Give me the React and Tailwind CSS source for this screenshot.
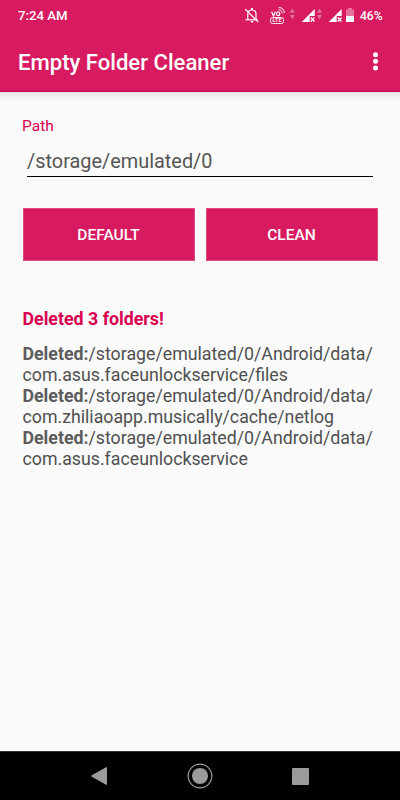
import React from "react";

function StatusIcons() {
  return (
    <svg width="116" height="24" viewBox="242 4 116 24" fill="none" aria-hidden="true">
      {/* muted bell */}
      <g stroke="#fff" strokeWidth="1.2">
        <path d="M247.8 19.6V14.2c0-2.6 1.700-4.200 4.100-4.200s4.100 1.600 4.100 4.200v5.400" />
        <path d="M245.500 19.800h12.200" />
        <path d="M245.300 9.300l13 12.800" />
      </g>
      <path d="M251 8h2v2h-2zM250.500 21h3c0 .9-.7 1.500-1.500 1.500s-1.500-.6-1.500-1.500z" fill="#fff" />
      {/* VoLTE */}
      <g stroke="#fff" strokeWidth="1">
        <path d="M271.600 11.700l1.900 4.300 1.900-4.300" strokeWidth="1.200" />
        <ellipse cx="278.200" cy="13.800" rx="1.600" ry="1.900" strokeWidth="1.200" />
        <path d="M278.500 9.700c2.300-.1 3.700 1.400 3.700 3.800" strokeWidth=".9" />
        <path d="M278.700 7.500c3.600-.1 5.700 2.200 5.700 5.700" strokeWidth=".9" />
      </g>
      <rect x="270.500" y="17.500" width="13" height="6" rx="2" stroke="#fff" strokeWidth=".9" />
      <text x="272.400" y="22.300" fontSize="5" fontWeight="700" textLength="9.200" fill="#fff" className="font-['Roboto',sans-serif]">LTE</text>
      {/* data arrows */}
      <g fill="#dc7398">
        <path d="M289.700 12.800l2.600-4.300 2.600 4.300zM289.700 14.900h5.200l-2.600 4.300z" />
        <path d="M316.900 12.800l2.600-4.300 2.600 4.300zM316.900 14.900h5.200l-2.600 4.300z" />
      </g>
      {/* signal bars */}
      <g fill="#fff">
        <path d="M301.800 22L314.700 9v7h-5v6z" />
        <path d="M328.800 22L341.700 9v7h-5v6z" />
      </g>
      <g stroke="#fff" strokeWidth="1.300">
        <path d="M310.800 17.500l3.600 4M314.400 17.500l-3.600 4" />
        <path d="M337.800 17.500l3.600 4M341.400 17.500l-3.600 4" />
      </g>
      {/* battery */}
      <path d="M348 8h4v1.500h2V16h-8V9.500h2z" fill="#e8709c" />
      <path d="M346 16h8v5.400q0 .6-.6.600h-6.800q-.6 0-.6-.6z" fill="#fff" />
    </svg>
  );
}

const deleted = [
  ["/storage/emulated/0/Android/data/", "com.asus.faceunlockservice/files"],
  ["/storage/emulated/0/Android/data/", "com.zhiliaoapp.musically/cache/netlog"],
  ["/storage/emulated/0/Android/data/", "com.asus.faceunlockservice"],
];

export default function App() {
  return (
    <div className="flex h-[800px] w-[400px] flex-col overflow-hidden bg-[#fafafa] font-['Roboto',sans-serif]">
      <header className="h-[92px] shrink-0 border-b border-[#cf0a4c] bg-[#d81b60] text-white">
        <div className="flex h-8 items-center pl-[18px] pr-[17px]">
          <span className="text-[13.2px] font-medium leading-4">7:24 AM</span>
          <div className="ml-auto flex items-center gap-[2px]">
            <StatusIcons />
            <span className="w-[23px] whitespace-nowrap text-[12px] font-medium leading-4">46%</span>
          </div>
        </div>
        <div className="flex h-[60px] items-center justify-between pl-[18px] pr-[22px]">
          <h1 className="text-[22.1px] font-medium leading-7">Empty Folder Cleaner</h1>
          <svg width="5" height="20" viewBox="0 0 5 20" fill="#fff" aria-hidden="true">
            <circle cx="2.5" cy="2.700" r="2.500" />
            <circle cx="2.5" cy="9.300" r="2.500" />
            <circle cx="2.5" cy="15.900" r="2.500" />
          </svg>
        </div>
      </header>
      <div className="h-3 shrink-0 bg-linear-to-b from-[#e4e4e4] via-[#f5f5f5] to-[#fafafa]" />

      <main className="flex-1 px-[22px] pt-3">
        <label className="block text-[15.5px] leading-5 text-[#d8004f]">Path</label>
        <div className="mx-[5px] mt-[12px] h-[29px] border-b border-black text-[19.9px] leading-[27px] text-[#555]">
          /storage/emulated/0
        </div>
        <div className="mt-[31px] flex h-[53px] gap-[11px] pl-[0.5px]">
          <button className="h-full w-[172px] border border-[#de4a80] bg-[#d81b60] pt-[3px] text-[15.5px] font-medium text-white">DEFAULT</button>
          <button className="h-full w-[172px] border border-[#de4a80] bg-[#d81b60] pt-[3px] text-[15.5px] font-medium text-white">CLEAN</button>
        </div>
        <h2 className="mt-[47px] pl-[0.5px] text-[17.8px] font-bold leading-[21px] text-[#d8004f]">Deleted 3 folders!</h2>
        <div className="mt-[15px] whitespace-nowrap pl-[0.5px] text-[17.75px] leading-[21.1px] text-[#505050]">
          {deleted.map(([dir, name]) => (
            <p key={name}>
              <b className="text-[#5c5c5c]">Deleted:</b>{dir}
              <br />
              {name}
            </p>
          ))}
        </div>
      </main>

      <nav className="flex h-[49px] shrink-0 items-center justify-between border-t border-[#333] bg-black pl-[90px] pr-[91px]">
        <svg width="18" height="20" viewBox="0 0 18 20" aria-hidden="true">
          <path d="M1.500 10L16.500 1.500v17z" fill="#9b9b9b" stroke="#9b9b9b" strokeLinejoin="round" />
        </svg>
        <svg width="26" height="26" viewBox="0 0 26 26" aria-hidden="true">
          <circle cx="13" cy="13" r="11.800" fill="none" stroke="#9b9b9b" strokeWidth="1.200" />
          <circle cx="13" cy="13" r="8" fill="#9b9b9b" />
        </svg>
        <div className="h-[17px] w-[17px] rounded-[1px] bg-[#9b9b9b]" />
      </nav>
    </div>
  );
}
